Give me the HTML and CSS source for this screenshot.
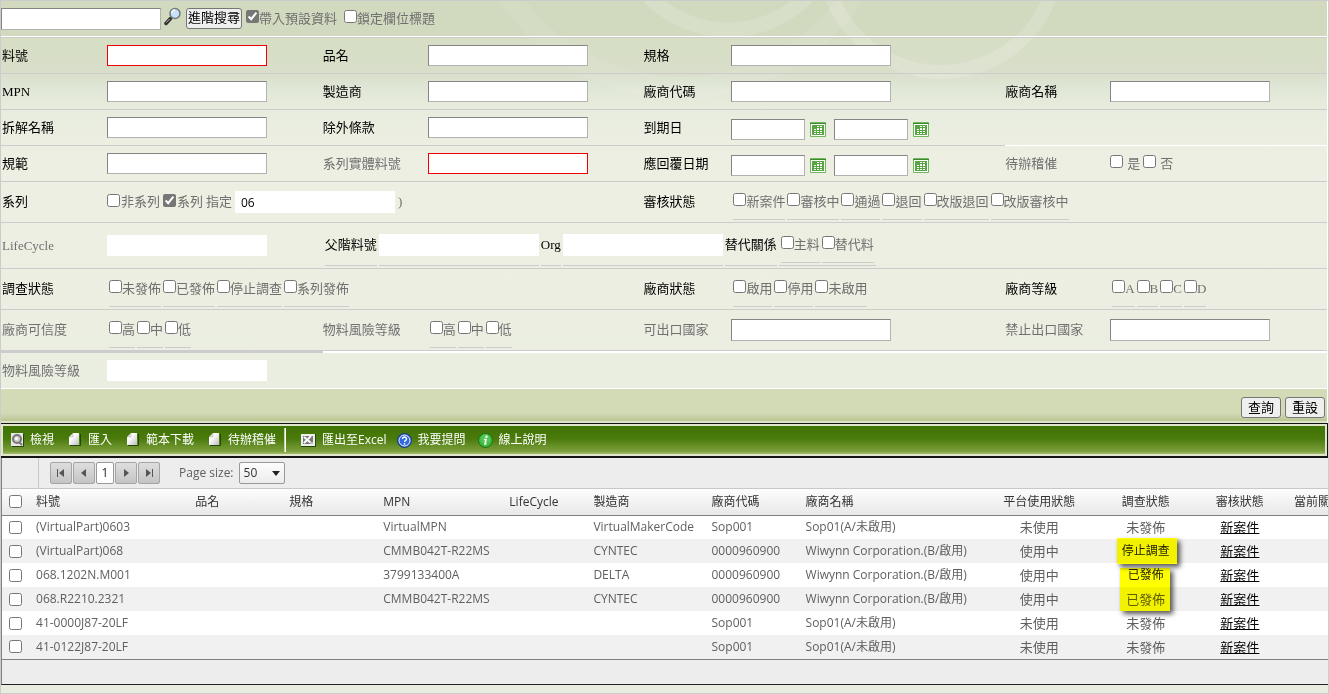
FILE: index.html
```html
<!DOCTYPE html>
<html lang="zh-Hant">
<head>
<meta charset="utf-8">
<title>料號查詢</title>
<link rel="stylesheet" href="styles.css">
</head>
<body>
<svg class="sprite" width="0" height="0" aria-hidden="true">
  <linearGradient id="paper" x1="0" y1="0" x2="1" y2="1"><stop offset=".35" stop-color="#fff"/><stop offset="1" stop-color="#bdbdbd"/></linearGradient>
  <symbol id="cal" viewBox="0 0 16 15">
    <rect x="0" y="0" width="16" height="15" rx="1" fill="#6fb75a"/>
    <rect x="0" y="1" width="16" height="1" fill="#3f8a2c"/>
    <rect x="1" y="2" width="14" height="12" fill="#fff"/>
    <rect x="2" y="3" width="12" height="10" fill="#58a544"/>
    <path d="M4 7h2v1H4zM7 4h2v1H7zM10 4h2v1h-2zM7 6h2v2H7zM10 6h2v2h-2zM4 9h2v1H4zM7 9h2v1H7zM10 9h2v1h-2zM4 11h2v1H4zM7 11h2v1H7zM10 11h2v1h-2z" fill="#fff"/>
  </symbol>
  <symbol id="page" viewBox="0 0 12 14">
    <path d="M1 12.500h10.500V1" fill="none" stroke="#24460a"/>
    <path d="M4 0h6v12H0V4h4z" fill="url(#paper)"/>
    <path d="M4 0v4H0z" fill="#e6e6e6"/>
    <path d="M4 0v4H0" fill="none" stroke="#aaa" stroke-width=".5"/>
  </symbol>
</svg>
<main class="page">
  <form class="search">
    <svg class="rings" width="760" height="110" aria-hidden="true">
      <g fill="none" stroke="#fff">
        <circle cx="287" cy="-81" r="110" stroke-width="15" stroke-opacity=".16"/>
        <circle cx="500" cy="-46" r="117" stroke-width="14" stroke-opacity=".16"/>
        <circle cx="240" cy="-120" r="207" stroke-width="22" stroke-opacity=".08"/>
      </g>
    </svg>
    <div class="topbar">
      <input class="box tall" type="text" aria-label="關鍵字">
      <svg class="magnifier" width="18" height="19" viewBox="0 0 18 19" aria-hidden="true">
        <path d="M6.500 11.500L2 16.500" stroke="#333" stroke-width="3.500" stroke-linecap="round"/>
        <path d="M5.500 12L2.500 15.500" stroke="#aaa" stroke-width="1"/>
        <circle cx="11" cy="6.500" r="5" fill="#c8e2fa" stroke="#777" stroke-width="1.500"/>
        <path d="M8 6a3 3 0 0 1 3-3" fill="none" stroke="#fff" stroke-width="1.500"/>
      </svg>
      <button class="btn advanced" type="button">進階搜尋</button>
      <label class="opt preset"><input type="checkbox" checked>帶入預設資料</label>
      <label class="opt lock"><input type="checkbox">鎖定欄位標題</label>
    </div>

    <div class="row">
      <label for="partno">料號</label><div><input id="partno" class="box red" type="text"></div>
      <label for="pname">品名</label><div><input id="pname" class="box" type="text"></div>
      <label for="spec">規格</label><div><input id="spec" class="box" type="text"></div>
    </div>
    <div class="row">
      <label for="mpn">MPN</label><div><input id="mpn" class="box" type="text"></div>
      <label for="maker">製造商</label><div><input id="maker" class="box" type="text"></div>
      <label for="vcode">廠商代碼</label><div><input id="vcode" class="box" type="text"></div>
      <label for="vname">廠商名稱</label><div><input id="vname" class="box" type="text"></div>
    </div>
    <div class="row white-end">
      <label for="dis">拆解名稱</label><div><input id="dis" class="box" type="text"></div>
      <label for="exc">除外條款</label><div><input id="exc" class="box" type="text"></div>
      <label for="due">到期日</label>
      <div class="dates">
        <input id="due" class="box date" type="text"><svg class="cal"><use href="#cal"/></svg>
        <input class="box date" type="text" aria-label="到期日 迄"><svg class="cal"><use href="#cal"/></svg>
      </div>
    </div>
    <div class="row">
      <label for="norm">規範</label><div><input id="norm" class="box" type="text"></div>
      <label for="real" class="dim">系列實體料號</label><div><input id="real" class="box red" type="text"></div>
      <label for="reply">應回覆日期</label>
      <div class="dates">
        <input id="reply" class="box date" type="text"><svg class="cal"><use href="#cal"/></svg>
        <input class="box date" type="text" aria-label="應回覆日期 迄"><svg class="cal"><use href="#cal"/></svg>
      </div>
      <span class="dim">待辦稽催</span>
      <div class="spaced"><label class="opt"><input type="checkbox">是</label><label class="opt"><input type="checkbox">否</label></div>
    </div>
    <div class="row mid">
      <span>系列</span>
      <div class="span3 series">
        <label class="opt"><input type="checkbox">非系列</label>
        <label class="opt"><input type="checkbox" checked>系列</label>
        <label class="opt" for="assign">指定</label>
        <input id="assign" class="box plain tall" type="text" value="06"><span class="dim">)</span>
      </div>
      <span>審核狀態</span>
      <div class="span3 list">
        <label class="opt"><input type="checkbox">新案件</label><label class="opt"><input type="checkbox">審核中</label><label class="opt"><input type="checkbox">通過</label><label class="opt"><input type="checkbox">退回</label><label class="opt"><input type="checkbox">改版退回</label><label class="opt"><input type="checkbox">改版審核中</label>
      </div>
    </div>
    <div class="row high">
      <label for="life" class="dim">LifeCycle</label><div><input id="life" class="box plain" type="text"></div>
      <div class="parent">
        <label for="ppart">父階料號</label><div><input id="ppart" class="box plain tall" type="text"></div>
        <label for="org">Org</label><div><input id="org" class="box plain tall" type="text"></div>
        <span>替代關係</span>
        <div class="list"><label class="opt"><input type="checkbox">主料</label><label class="opt"><input type="checkbox">替代料</label></div>
      </div>
    </div>
    <div class="row mid">
      <span>調查狀態</span>
      <div class="span3 list"><label class="opt"><input type="checkbox">未發佈</label><label class="opt"><input type="checkbox">已發佈</label><label class="opt"><input type="checkbox">停止調查</label><label class="opt"><input type="checkbox">系列發佈</label></div>
      <span>廠商狀態</span>
      <div class="list"><label class="opt"><input type="checkbox">啟用</label><label class="opt"><input type="checkbox">停用</label><label class="opt"><input type="checkbox">未啟用</label></div>
      <span>廠商等級</span>
      <div class="list"><label class="opt"><input type="checkbox">A</label><label class="opt"><input type="checkbox">B</label><label class="opt"><input type="checkbox">C</label><label class="opt"><input type="checkbox">D</label></div>
    </div>
    <div class="row mid">
      <span class="dim">廠商可信度</span>
      <div class="list"><label class="opt"><input type="checkbox">高</label><label class="opt"><input type="checkbox">中</label><label class="opt"><input type="checkbox">低</label></div>
      <span class="dim">物料風險等級</span>
      <div class="list"><label class="opt"><input type="checkbox">高</label><label class="opt"><input type="checkbox">中</label><label class="opt"><input type="checkbox">低</label></div>
      <label for="exp" class="dim">可出口國家</label><div><input id="exp" class="box tall" type="text"></div>
      <label for="ban" class="dim">禁止出口國家</label><div><input id="ban" class="box tall" type="text"></div>
    </div>
    <div class="row last">
      <label for="risk" class="dim">物料風險等級</label><div><input id="risk" class="box plain" type="text"></div>
    </div>
    <div class="actions">
      <button class="btn" type="submit">查詢</button>
      <button class="btn" type="reset">重設</button>
    </div>
  </form>

  <nav class="toolbar">
    <div class="tools">
      <button type="button"><svg width="13" height="14" viewBox="0 0 13 14"><path d="M1 13.500h11.500V1" stroke="#24460a" fill="none"/><rect width="12" height="13" fill="#e8e8e8"/><circle cx="6" cy="6" r="4" fill="#ccc" stroke="#777" stroke-width="2"/><path d="M8 9l3 3" stroke="#777" stroke-width="2"/><circle cx="5.500" cy="5.500" r="1.500" fill="#fff"/></svg>檢視</button>
      <button type="button"><svg width="12" height="14"><use href="#page"/></svg>匯入</button>
      <button type="button"><svg width="12" height="14"><use href="#page"/></svg>範本下載</button>
      <button type="button"><svg width="12" height="14"><use href="#page"/></svg>待辦稽催</button>
      <span class="sep"></span>
      <button type="button" class="tight"><svg width="15" height="13" viewBox="0 0 15 13"><rect width="15" height="13" fill="#24460a"/><rect width="14" height="12" fill="#eee"/><rect x="2" y="2" width="10" height="8" fill="#777"/><path d="M3 9L10 2M3 3l7 6" stroke="#fff" stroke-width="2"/><path d="M9 8h3v2H9z" fill="#bbb"/></svg>匯出至Excel</button>
      <button type="button" class="tight"><svg width="15" height="15" viewBox="0 0 15 15"><circle cx="7.500" cy="7.500" r="7" fill="#2457c4" stroke="#173a86"/><circle cx="7.500" cy="7.500" r="5.500" fill="#2f68dc" stroke="#fff"/><path d="M5.500 6a2 2 0 1 1 3 1.700q-1 .5-1 1.300" fill="none" stroke="#fff" stroke-width="1.500"/><circle cx="7.500" cy="10.800" r=".9" fill="#fff"/></svg>我要提問</button>
      <button type="button" class="tight"><svg width="15" height="15" viewBox="0 0 15 15"><circle cx="7.500" cy="7.500" r="7" fill="#3db83c" stroke="#1e6e14"/><circle cx="7.500" cy="6" r="5" fill="#5fd05c" fill-opacity=".6"/><circle cx="8.500" cy="3.800" r="1.200" fill="#fff"/><path d="M6 6.500h2L7 11h1.500" fill="none" stroke="#fff" stroke-width="1.500"/></svg>線上說明</button>
    </div>
  </nav>

  <section class="grid">
    <div class="pager">
      <div class="pager-buttons">
        <button type="button" aria-label="第一頁"><svg width="10" height="10"><path d="M1 1h1v8H1zM8 1v8L3 5z"/></svg></button>
        <button type="button" aria-label="上一頁"><svg width="10" height="10"><path d="M7 1v8L2 5z"/></svg></button>
        <button type="button" class="current">1</button>
        <button type="button" aria-label="下一頁"><svg width="10" height="10"><path d="M3 1v8l5-4z"/></svg></button>
        <button type="button" aria-label="最後頁"><svg width="10" height="10"><path d="M8 1h1v8H8zM2 1v8l5-4z"/></svg></button>
      </div>
      <label for="size">Page size:</label>
      <span class="select"><select id="size"><option>50</option></select></span>
    </div>
    <table>
      <colgroup><col class="c1"><col class="c2"><col class="c3"><col class="c3"><col class="c5"><col class="c6"><col class="c7"><col class="c3"><col class="c9"><col class="c10"><col class="c5"><col class="c12"><col class="c13"></colgroup>
      <thead>
        <tr><th><input type="checkbox" aria-label="全選"></th><th>料號</th><th>品名</th><th>規格</th><th>MPN</th><th>LifeCycle</th><th>製造商</th><th>廠商代碼</th><th>廠商名稱</th><th class="mid-cell">平台使用狀態</th><th class="mid-cell">調查狀態</th><th class="mid-cell">審核狀態</th><th class="station">當前關</th></tr>
      </thead>
      <tbody>
        <tr><td><input type="checkbox" aria-label="選取"></td><td>(VirtualPart)0603</td><td></td><td></td><td>VirtualMPN</td><td></td><td>VirtualMakerCode</td><td>Sop001</td><td>Sop01(A/未啟用)</td><td class="zh">未使用</td><td class="zh">未發佈</td><td class="zh"><a href="#">新案件</a></td><td></td></tr>
        <tr><td><input type="checkbox" aria-label="選取"></td><td>(VirtualPart)068</td><td></td><td></td><td>CMMB042T-R22MS</td><td></td><td>CYNTEC</td><td>0000960900</td><td>Wiwynn Corporation.(B/啟用)</td><td class="zh">使用中</td><td class="marked">停止調查<span class="hl wide"></span></td><td class="zh"><a href="#">新案件</a></td><td></td></tr>
        <tr><td><input type="checkbox" aria-label="選取"></td><td>068.1202N.M001</td><td></td><td></td><td>3799133400A</td><td></td><td>DELTA</td><td>0000960900</td><td>Wiwynn Corporation.(B/啟用)</td><td class="zh">使用中</td><td class="marked">已發佈<span class="hl double"></span></td><td class="zh"><a href="#">新案件</a></td><td></td></tr>
        <tr><td><input type="checkbox" aria-label="選取"></td><td>068.R2210.2321</td><td></td><td></td><td>CMMB042T-R22MS</td><td></td><td>CYNTEC</td><td>0000960900</td><td>Wiwynn Corporation.(B/啟用)</td><td class="zh">使用中</td><td class="zh">已發佈</td><td class="zh"><a href="#">新案件</a></td><td></td></tr>
        <tr><td><input type="checkbox" aria-label="選取"></td><td>41-0000J87-20LF</td><td></td><td></td><td></td><td></td><td></td><td>Sop001</td><td>Sop01(A/未啟用)</td><td class="zh">未使用</td><td class="zh">未發佈</td><td class="zh"><a href="#">新案件</a></td><td></td></tr>
        <tr><td><input type="checkbox" aria-label="選取"></td><td>41-0122J87-20LF</td><td></td><td></td><td></td><td></td><td></td><td>Sop001</td><td>Sop01(A/未啟用)</td><td class="zh">未使用</td><td class="zh">未發佈</td><td class="zh"><a href="#">新案件</a></td><td></td></tr>
      </tbody>
    </table>
    <div class="grid-foot"></div>
  </section>
</main>
</body>
</html>
```
FILE: styles.css
```css
* { box-sizing: border-box; }

body {
  margin: 0;
  background: #e9eddf;
  color: #000;
  font: 13px/18px "Liberation Serif", "Noto Sans CJK TC", serif;
}

button, input, select { font: inherit; margin: 0; }
input[type="checkbox"] { width: 13px; height: 13px; flex: none; accent-color: #767676; }
.sprite { position: absolute; }

.page {
  border: 1px solid #ccc;
  padding-bottom: 8px;
  overflow: hidden;
}

/* search form */
.search {
  position: relative;
  border-right: 1px solid #fff;
  background: linear-gradient(#d1d9bf 0, #d1d9bf 36px, #d6dec4 37px, #d8dec9 70px, #e2e8d8 90px, #e9eddf 115px, #edefe2 165px, #eaeee0 388px);
}
.rings { position: absolute; top: 0; left: 440px; pointer-events: none; }

.topbar {
  position: relative;
  display: flex;
  align-items: center;
  height: 36px;
  padding-top: 1px;
  border-bottom: 1px solid #fff;
  color: #707070;
}
.magnifier { margin: 0 4px 6px 3px; }
.topbar .opt { padding-bottom: 1px; }
.topbar .lock { margin-left: 7px; }
.preset { margin-left: 4px; }

.box {
  display: block;
  width: 160px;
  max-width: 100%;
  height: 21px;
  padding: 0 5px;
  border: 1px solid;
  border-color: #858585 #b2b2b2 #b2b2b2 #858585;
  border-radius: 0;
  background: #fff;
}
.box.tall { height: 22px; }
.box.red { border-color: #f00000; }
.box.plain { border-color: #fff; }
.box.date { width: 74px; }

.btn {
  height: 21px;
  padding: 0 6px;
  border: 1px solid #767676;
  border-radius: 3px;
  background: #efefef;
  color: #000;
  line-height: 18px;
}
.btn.advanced { padding: 0 1px; margin-bottom: 2px; }

.row {
  position: relative;
  display: grid;
  grid-template-columns: 105fr 216fr 105fr 216fr 88fr 274fr 105fr 217fr;
  align-items: center;
  min-height: 36px;
  padding-left: 1px;
  border-top: 1px solid #ccc;
}
.row > label, .row > span { white-space: nowrap; }
.row > :nth-child(odd) { min-width: 0; }
.row.mid { min-height: 41px; }
.row.high { min-height: 46px; }
.row.last { min-height: 39px; padding-top: 2px; border-bottom: 1px solid #fff; box-shadow: inset 0 2px #fff; }
.row.last::before {
  content: "";
  position: absolute;
  top: 0;
  left: 0;
  width: 24.300%;
  height: 2px;
  background: #ccc;
}
.row.white-end::after {
  content: "";
  position: absolute;
  z-index: 1;
  right: 0;
  bottom: -1px;
  width: 24.300%;
  height: 1px;
  background: #fff;
}
.dim { color: #707070; }
.span3 { grid-column: span 3; }

.opt { display: flex; align-items: center; color: #707070; white-space: nowrap; }
.opt input { margin-bottom: 4px; margin-right: 1px; }
.topbar .opt input { margin-right: 0; }

.dates { display: flex; align-items: center; gap: 5px; padding-top: 3px; }
.cal { width: 16px; height: 15px; margin-right: 3px; }
.spaced, .series { display: flex; align-items: center; gap: 3px; }
.spaced .opt input { margin-right: 4px; }
.series .box { font-family: "Open Sans", sans-serif; font-size: 12px; }

.list { display: flex; align-self: end; gap: 2px; padding: 0 2px 2px; }
.list .opt { height: 28px; padding-bottom: 8px; border-bottom: 1px solid #ccc; }
.list .opt input { margin-right: 0; }

.parent {
  grid-column: 3 / -1;
  align-self: end;
  display: flex;
  gap: 2px;
  padding: 0 2px 2px;
  white-space: nowrap;
}
.parent > * { display: flex; align-items: center; height: 42px; border-bottom: 1px solid #ccc; }
.parent > .list { align-items: flex-end; padding-bottom: 2px; }

.actions {
  position: relative;
  display: flex;
  justify-content: flex-end;
  gap: 4px;
  padding: 8px 2px 3px;
  background: linear-gradient(#d2dab6, #d2dab6 75%, #bac694);
  border-bottom: 2px solid #dbe2c6;
}

/* toolbar */
.toolbar {
  padding: 2px;
  border: 1px solid #141414;
  border-left: 0;
  border-bottom-width: 2px;
  background: #dfe6cc;
}
.tools {
  display: flex;
  align-items: center;
  height: 28px;
  padding-left: 8px;
  background: linear-gradient(#3f7403, #4a7a0c 45%, #7b9f3b 90%, #a5bd72);
}
.tools button {
  display: flex;
  align-items: center;
  gap: 7px;
  margin-right: 15px;
  padding: 0;
  border: 0;
  background: none;
  color: #fff;
  font: 12px/16px "Open Sans", "Noto Sans CJK TC", sans-serif;
  white-space: nowrap;
}
.tools button:first-child { gap: 6px; }
.tools button.tight { gap: 6px; margin-right: 12px; }
.tools .tight:nth-of-type(5) { margin-right: 10px; }
.sep { width: 2px; height: 24px; margin: 0 15px 0 -7px; background: linear-gradient(90deg, #c8d6ad 50%, #fff 50%); }

/* result grid */
.grid {
  border-left: 1px solid #808080;
  border-bottom: 1px solid #222;
  background: #ededed;
  font-family: "Open Sans", "Noto Sans CJK TC", sans-serif;
  font-size: 12px;
  color: #5f5f5f;
}
.pager {
  display: flex;
  align-items: center;
  height: 31px;
  border-bottom: 1px solid #c8c8c8;
}
.pager::before { content: ""; width: 36px; height: 30px; border-right: 1px solid #c8c8c8; }
.pager-buttons { display: flex; gap: 1px; margin: 0 19px 0 11px; }
.pager-buttons button {
  display: grid;
  place-items: center;
  width: 22px;
  height: 22px;
  padding: 0;
  border: 1px solid #a5a5a5;
  border-radius: 2px;
  background: linear-gradient(#dedede, #c4c4c4);
}
.pager-buttons svg { fill: #555; }
.pager-buttons .current { width: 18px; background: #fff; border-color: #999; color: #222; }
.select { position: relative; margin-left: 5px; }
.select::after {
  content: "";
  position: absolute;
  top: 9px;
  right: 5px;
  border: 4px solid transparent;
  border-top: 5px solid #222;
  pointer-events: none;
}
.select select {
  appearance: none;
  display: block;
  width: 46px;
  height: 22px;
  padding: 0 4px;
  border: 1px solid #999;
  border-radius: 2px;
  background: linear-gradient(#fdfdfd, #ececec);
  color: #333;
}

table { width: 100%; table-layout: fixed; border-collapse: collapse; border-bottom: 1px solid #808080; }
.c1 { width: 27px; }
.c2 { width: 159px; }
.c3 { width: 94px; }
.c5 { width: 126px; }
.c6 { width: 84px; }
.c7 { width: 118px; }
.c9 { width: 197px; }
.c10 { width: 87px; }
.c12 { width: 62px; }
.c13 { width: 57px; }

th, td { height: 24px; padding: 0 0 0 7px; text-align: left; white-space: nowrap; line-height: 18px; }
th {
  height: 26px;
  font-weight: 400;
  color: #333;
  background: linear-gradient(#fdfdfd, #e8e8e8);
  border-bottom: 1px solid #808080;
}
.mid-cell { padding: 0; text-align: center; }
.station { padding-left: 23px; }
tbody tr { background: #fff; }
tbody tr:nth-child(even) { background: #f1f1f1; }
th input, td input { display: block; }
.zh, .marked { padding: 0; text-align: center; font-size: 13px; }
td a { color: #000; }
.marked { position: relative; font-size: 12px; color: #222; }
.hl {
  position: absolute;
  background: #ff0;
  mix-blend-mode: multiply;
  box-shadow: 3px 3px 5px #555;
}
.hl.wide { inset: -1px 32px -1px 34px; }
.hl.double { top: 5px; bottom: -24px; left: 37px; right: 39px; }
.grid-foot { height: 24px; }
```
